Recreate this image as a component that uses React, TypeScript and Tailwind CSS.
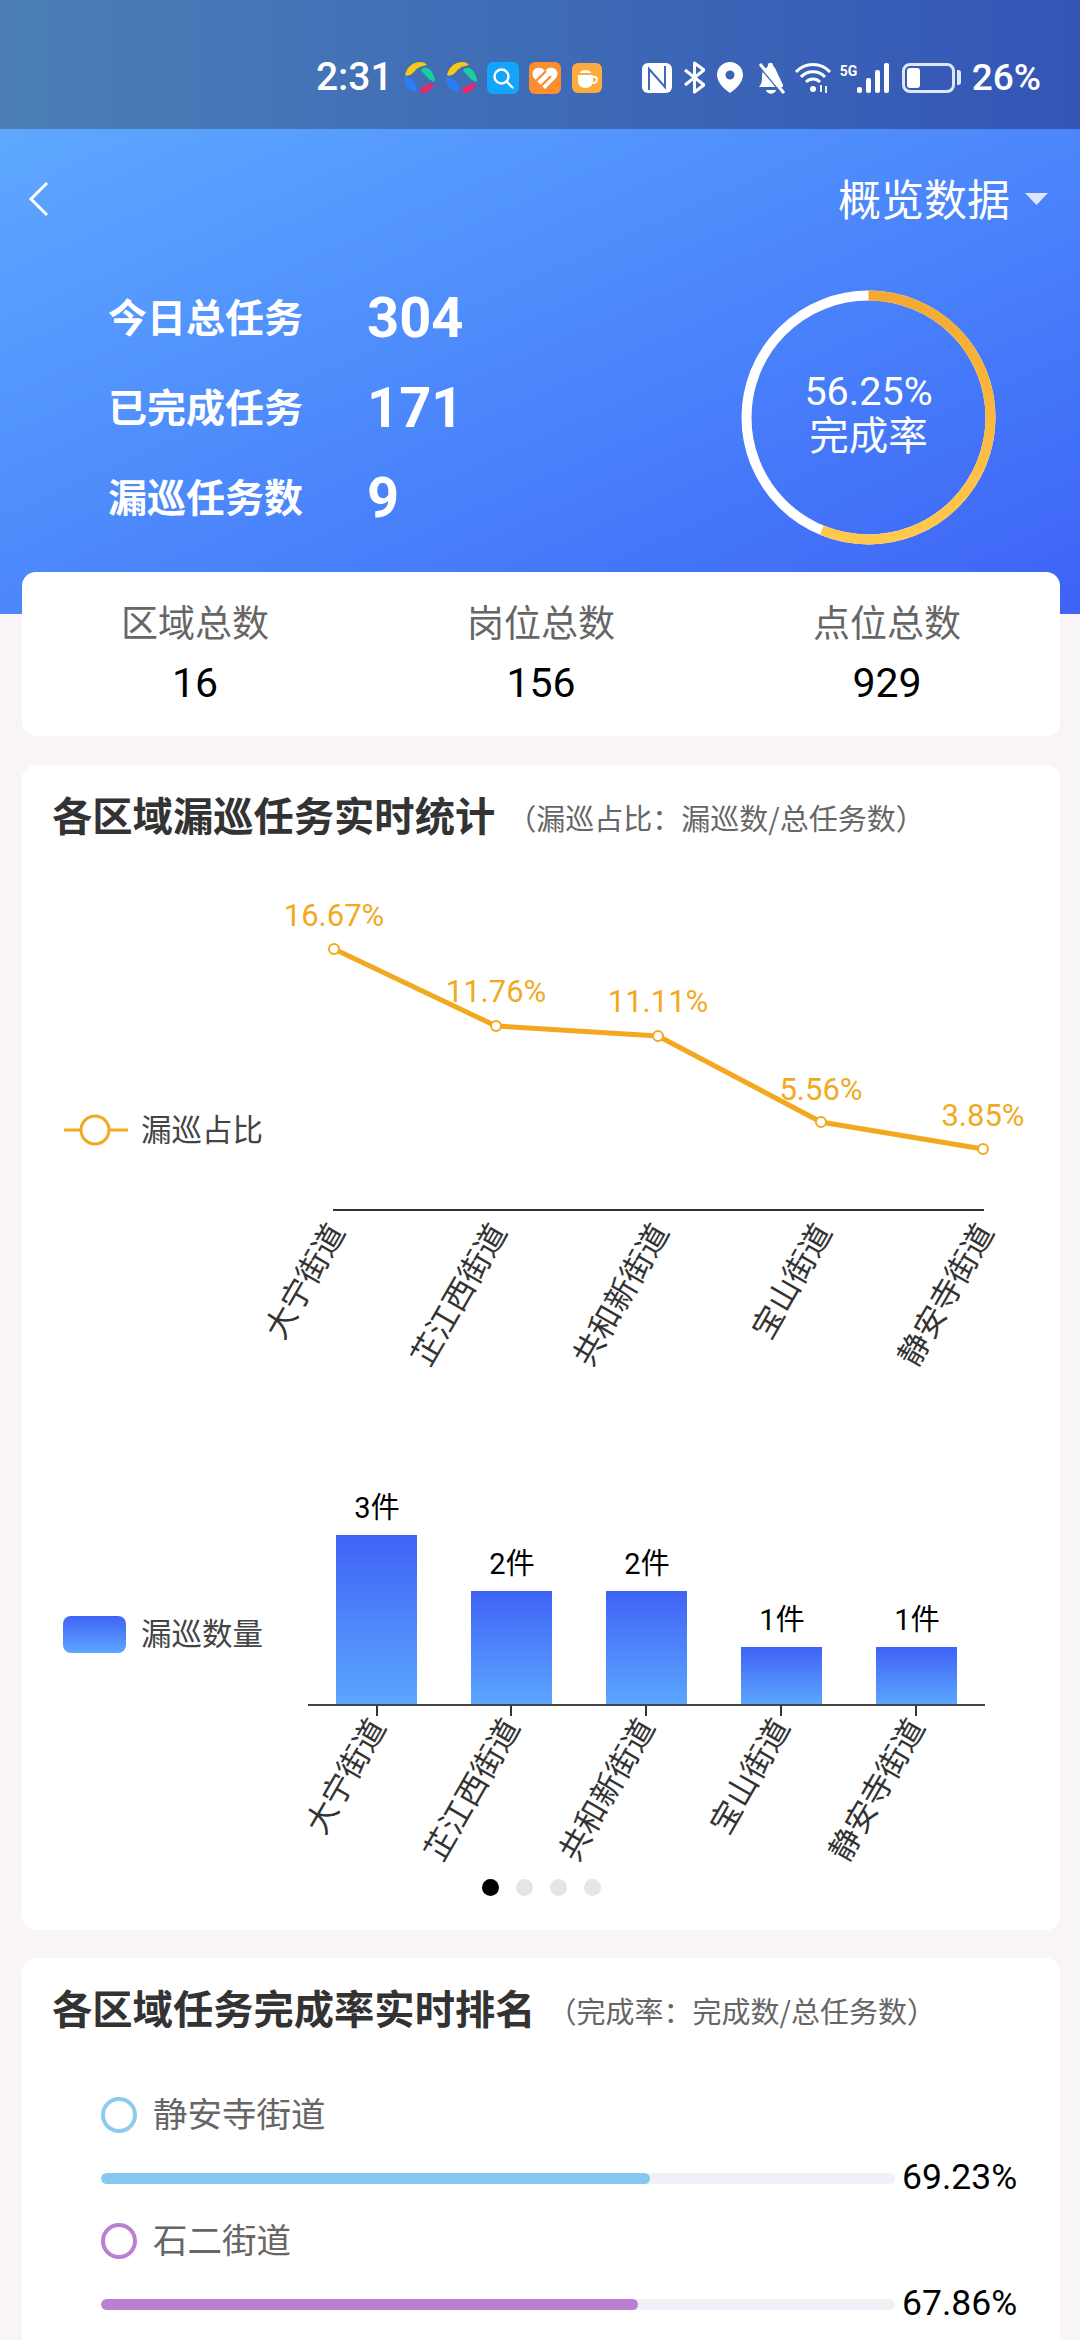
import React from "react";

const lineData = [
  { x: 334, y: 949, label: "16.67%", name: "大宁街道", ly: 926 },
  { x: 496, y: 1026, label: "11.76%", name: "芷江西街道", ly: 1002 },
  { x: 658, y: 1036, label: "11.11%", name: "共和新街道", ly: 1012 },
  { x: 821, y: 1122, label: "5.56%", name: "宝山街道", ly: 1100 },
  { x: 983, y: 1149, label: "3.85%", name: "静安寺街道", ly: 1126 },
];

const barData = [
  { x: 336, top: 1535, label: "3件", name: "大宁街道", tick: 377 },
  { x: 471, top: 1591, label: "2件", name: "芷江西街道", tick: 511 },
  { x: 606, top: 1591, label: "2件", name: "共和新街道", tick: 646 },
  { x: 741, top: 1647, label: "1件", name: "宝山街道", tick: 781 },
  { x: 876, top: 1647, label: "1件", name: "静安寺街道", tick: 916 },
];

const cjk = "font-['Noto_Sans_CJK_SC','Noto_Sans',sans-serif]";

const Swirl = () => (
  <svg width="31" height="31" viewBox="0 0 31 31">
    <path d="M1 13C3 5 9 0 16 0c3 0 6 1 7 3-3 1-6 1-9 3-3 2-5 6-8 7-2 1-4 1-5 0z" fill="#f7c815" />
    <path d="M20 6c3-1 6 1 8 4 2 3 3 7 3 10-3-1-6-2-8-5-2-2-4-5-6-6 0-1 1-2 3-3z" fill="#19cf9b" />
    <path d="M30 22c-1 4-6 8-11 9-2 0-3-1-3-2 1-3 4-5 7-6 2-1 5-2 7-1z" fill="#f5245f" />
    <path d="M1 15c3 1 6 1 8 3 3 3 4 8 4 12C6 30 0 24 0 17c0-1 0-2 1-2z" fill="#2f7cf2" />
  </svg>
);

const StatusIcons = () => (
  <div className="flex items-center">
    <span className="mr-[11px] font-['Roboto',sans-serif] text-[39px] font-medium leading-none text-white">2:31</span>
    <Swirl />
    <div className="ml-[11px]">
      <Swirl />
    </div>
    <svg className="ml-[10px]" width="32" height="32" viewBox="0 0 32 32">
      <rect width="32" height="32" rx="6" fill="#12a5fb" />
      <circle cx="14.500" cy="14.500" r="7" fill="none" stroke="#fff" strokeWidth="2.400" />
      <path d="M19.500 19.500l6 6" stroke="#fff" strokeWidth="2.400" strokeLinecap="round" />
    </svg>
    <svg className="ml-[10px]" width="32" height="32" viewBox="0 0 32 32">
      <rect width="32" height="32" rx="6" fill="#fb8e2e" />
      <path d="M16 27L5 16c-3-4-1-9 3-10 3-1 6 0 8 3 2-3 5-4 8-3 4 1 6 6 3 10z" fill="#fff" />
      <path d="M7 19L17 9M12 24l10-10" stroke="#fb8e2e" strokeWidth="2.400" />
    </svg>
    <svg className="ml-[11px]" width="30" height="30" viewBox="0 0 30 30">
      <rect width="30" height="30" rx="6" fill="#fdab3c" />
      <path d="M6 12h15v6c0 4-3 7-7.500 7S6 22 6 18z" fill="#fff" />
      <path d="M21 14h2c3 0 3 6-2 6" fill="none" stroke="#fff" strokeWidth="1.800" />
      <path d="M8 10c0-4 11-4 11 0z" fill="#fff" />
    </svg>
    <svg className="ml-[40px]" width="30" height="30" viewBox="0 0 30 30">
      <path d="M6 0h18a6 6 0 0 1 6 6v18a6 6 0 0 1-6 6H6a6 6 0 0 1-6-6V6a6 6 0 0 1 6-6z" fill="#fff" />
      <path d="M7 27V6l16 18V3" fill="none" stroke="#3f68bb" strokeWidth="2" />
    </svg>
    <svg className="ml-[12px]" width="21" height="33" viewBox="0 0 21 33" fill="none" stroke="#fff" strokeWidth="3">
      <path d="M1 9l19 15-9.500 7V2L20 9 1 24" strokeLinejoin="round" />
    </svg>
    <svg className="ml-[12px]" width="26" height="31" viewBox="0 0 26 31">
      <path fillRule="evenodd" d="M13 0c7 0 13 5.500 13 13 0 7-7 14-13 18C7 27 0 20 0 13 0 5.500 6 0 13 0zm0 8.500a4.500 4.500 0 1 0 0 9 4.500 4.500 0 0 0 0-9z" fill="#fff" />
    </svg>
    <svg className="ml-[12px]" width="31" height="33" viewBox="0 0 31 33">
      <path d="M4 26c3-3 3-7 3-11 0-3 1-6 3-7 1-1 3-2 3-4 0-3 5-3 5 0 0 1 1 2 2 3l8 17v2z" fill="#fff" />
      <path d="M11 29h10c-1 5-9 5-10 0z" fill="#fff" />
      <path d="M5 3l24 29" stroke="#3f68bb" strokeWidth="1.500" transform="translate(-2 1)" />
      <path d="M5 3l24 29" stroke="#fff" strokeWidth="3" />
    </svg>
    <svg className="ml-[9px]" width="36" height="30" viewBox="0 0 36 30" fill="none" stroke="#fff" strokeWidth="3">
      <path d="M1 9c9-10 25-10 34 0" />
      <path d="M6 14c6-7 18-7 24 0" />
      <path d="M11 19c4-4 10-4 14 0" />
      <circle cx="18" cy="26" r="3" fill="#fff" stroke="none" />
      <path d="M26 22v7M31 23v7" strokeWidth="1.800" />
    </svg>
    <div className="ml-[9px] flex h-[30px] items-end">
      <div className="relative h-[30px] w-[50px]">
        <span className="absolute left-0 top-[1px] font-['Roboto',sans-serif] text-[14px] font-bold leading-[14px] text-white">5G</span>
        <div className="absolute bottom-0 left-[17px] h-[6px] w-[5px] rounded-[2px] bg-white" />
        <div className="absolute bottom-0 left-[26px] h-[15px] w-[5px] rounded-[2px] bg-white" />
        <div className="absolute bottom-0 left-[35px] h-[23px] w-[5px] rounded-[2px] bg-white" />
        <div className="absolute bottom-0 left-[44px] h-[30px] w-[5px] rounded-[2px] bg-white" />
      </div>
    </div>
    <div className="ml-[12px] flex h-[30px] w-[53px] items-center rounded-[8px] border-[3px] border-[#dfe8f8] pl-[2px]">
      <div className="h-[20px] w-[13px] rounded-[3px] bg-white" />
    </div>
    <div className="ml-[2px] h-[15px] w-[4px] rounded-r-[3px] bg-[#dfe8f8]" />
    <span className="ml-[11px] font-['Roboto',sans-serif] text-[37px] font-medium leading-none text-white">26%</span>
  </div>
);

const StatRow = ({ label, value }: { label: string; value: string }) => (
  <div className="flex h-[90px] items-center">
    <span className="w-[259px] pb-[2px] text-[39px] font-bold leading-none text-white">{label}</span>
    <span className="pt-[3px] font-['Roboto',sans-serif] text-[56px] font-bold leading-none text-white">{value}</span>
  </div>
);

const Ring = () => (
  <div className="relative mr-[84px] mt-[19px] h-[255px] w-[255px]">
    <svg width="255" height="255" viewBox="0 0 255 255">
      <defs>
        <linearGradient id="ringGrad" x1="0" y1="0" x2="0" y2="1">
          <stop offset="0" stopColor="#f5a92f" />
          <stop offset="1" stopColor="#ffc94d" />
        </linearGradient>
      </defs>
      <circle cx="127.500" cy="127.500" r="122" fill="none" stroke="#fff" strokeWidth="10" />
      <path d="M127.500 5.500A122 122 0 1 1 80.800 240.200" fill="none" stroke="url(#ringGrad)" strokeWidth="10" />
    </svg>
    <div className="absolute inset-0 flex items-center justify-center pb-[8px] text-center font-['Roboto','Noto_Sans_CJK_SC',sans-serif] text-[39.500px] leading-[45px] text-white">
      <p>
        56.25%
        <br />
        完成率
      </p>
    </div>
  </div>
);

const Summary = ({ label, value }: { label: string; value: string }) => (
  <div className="flex flex-col items-center">
    <span className="text-[37px] leading-[60px] text-[#666666]">{label}</span>
    <span className="pt-[2px] font-['Roboto',sans-serif] text-[41px] leading-[60px] text-black">{value}</span>
  </div>
);

const LineChart = () => (
  <svg className="block" width="1038" height="535" viewBox="22 865 1038 535">
    <polyline
      points={lineData.map((d) => `${d.x},${d.y}`).join(" ")}
      fill="none"
      stroke="#f2a91f"
      strokeWidth="5"
    />
    {lineData.map((d) => (
      <g key={d.name}>
        <circle cx={d.x} cy={d.y} r="5" fill="#fff" stroke="#f2a91f" strokeWidth="2" />
        <text x={d.x} y={d.ly} textAnchor="middle" fontFamily="Roboto, sans-serif" fontSize="31" fill="#f2a91f">
          {d.label}
        </text>
        <text
          x={d.x + 12}
          y={1232}
          textAnchor="end"
          fontSize="31.500"
          fill="#333"
          transform={`rotate(-60 ${d.x + 12} 1232)`}
        >
          {d.name}
        </text>
      </g>
    ))}
    <line x1="333" y1="1210" x2="984" y2="1210" stroke="#333" strokeWidth="2" />
    <line x1="64" y1="1130" x2="128" y2="1130" stroke="#f2a91f" strokeWidth="3" />
    <circle cx="95" cy="1130" r="14" fill="#fff" stroke="#f2a91f" strokeWidth="3" />
    <text x="141" y="1141" fontSize="30.500" fill="#444">漏巡占比</text>
  </svg>
);

const BarChart = () => (
  <svg className="block" width="1038" height="470" viewBox="22 1400 1038 470">
    <defs>
      <linearGradient id="barGrad" x1="0" y1="0" x2="0" y2="1">
        <stop offset="0" stopColor="#3f63f6" />
        <stop offset="1" stopColor="#5ca6ff" />
      </linearGradient>
    </defs>
    {barData.map((d) => (
      <g key={d.name}>
        <rect x={d.x} y={d.top} width="81" height={1705 - d.top} fill="url(#barGrad)" />
        <text x={d.x + 41} y={d.top - 17} textAnchor="middle" fontFamily="Roboto, 'Noto Sans CJK SC', sans-serif" fontSize="29" fill="#000">
          {d.label}
        </text>
        <line x1={d.tick} y1="1705" x2={d.tick} y2="1716" stroke="#333" strokeWidth="2" />
        <text
          x={d.tick + 10}
          y={1727}
          textAnchor="end"
          fontSize="31.500"
          fill="#333"
          transform={`rotate(-60 ${d.tick + 10} 1727)`}
        >
          {d.name}
        </text>
      </g>
    ))}
    <line x1="308" y1="1705" x2="985" y2="1705" stroke="#444" strokeWidth="2" />
    <rect x="63" y="1616" width="63" height="37" rx="8" fill="url(#barGrad)" />
    <text x="141" y="1645" fontSize="30.500" fill="#444">漏巡数量</text>
  </svg>
);

const SectionTitle = ({ title, note, gap }: { title: string; note: string; gap: string }) => (
  <div className="flex h-[100px] items-center pl-[30px]">
    <span className="pb-[1px] text-[40.300px] font-bold leading-none text-[#333333]">{title}</span>
    <span className={`${gap} pt-[5px] text-[29px] leading-none text-[#666666]`}>{note}</span>
  </div>
);

const Rank = ({
  name,
  value,
  width,
  ring,
  fill,
}: {
  name: string;
  value: string;
  width: string;
  ring: string;
  fill: string;
}) => (
  <div className="h-[126px] pl-[79px]">
    <div className="flex h-[36px] items-center">
      <div className={`h-[36px] w-[36px] rounded-full border-4 ${ring}`} />
      <span className="ml-[16px] pb-[5px] text-[34.500px] leading-none text-[#666666]">{name}</span>
    </div>
    <div className="mt-[27px] flex h-[36px] items-center">
      <div className="h-[11px] w-[794px] overflow-hidden rounded-full bg-[#f0f0f7]">
        <div className={`h-full rounded-full ${width} ${fill}`} />
      </div>
      <span className="ml-[7px] font-['Roboto',sans-serif] text-[35.500px] leading-none text-black">{value}</span>
    </div>
  </div>
);

const App = () => {
  return (
    <div className={`h-[2340px] w-[1080px] overflow-hidden bg-[#f9f4f8] ${cjk}`}>
      <div className="flex h-[129px] items-center justify-end bg-linear-to-r from-[#4b7fb6] to-[#3455b6] pr-[39px] pt-[26px]">
        <StatusIcons />
      </div>
      <div className="h-[485px] bg-linear-to-br from-[#5ea8ff] to-[#3e62f6]">
        <div className="flex h-[140px] items-center justify-between pl-[28px] pr-[32px]">
          <svg width="22" height="36" viewBox="0 0 22 36" fill="none" stroke="#fff" strokeWidth="3">
            <path d="M19 2L3 18l16 16" />
          </svg>
          <div className="flex items-center">
            <span className="pb-[4px] text-[43px] leading-none text-white">概览数据</span>
            <svg className="ml-[15px]" width="23" height="12" viewBox="0 0 23 12">
              <path d="M0 0h23L11.500 12z" fill="#dfe6fb" />
            </svg>
          </div>
        </div>
        <div className="flex items-start justify-between pl-[108px] pt-[2px]">
          <div>
            <StatRow label="今日总任务" value="304" />
            <StatRow label="已完成任务" value="171" />
            <StatRow label="漏巡任务数" value="9" />
          </div>
          <Ring />
        </div>
      </div>
      <div className="relative -mt-[42px] ml-[22px] mr-[20px] grid h-[164px] grid-cols-3 content-start rounded-[14px] bg-white pt-[19px]">
        <Summary label="区域总数" value="16" />
        <Summary label="岗位总数" value="156" />
        <Summary label="点位总数" value="929" />
      </div>
      <div className="ml-[22px] mr-[20px] mt-[29px] h-[1165px] rounded-[14px] bg-white">
        <SectionTitle title="各区域漏巡任务实时统计" note="（漏巡占比：漏巡数/总任务数）" gap="ml-[12px]" />
        <LineChart />
        <BarChart />
        <div className="mt-[9px] flex justify-center gap-[17px]">
          <div className="h-[17px] w-[17px] rounded-full bg-black" />
          <div className="h-[17px] w-[17px] rounded-full bg-[#e5e5e5]" />
          <div className="h-[17px] w-[17px] rounded-full bg-[#e5e5e5]" />
          <div className="h-[17px] w-[17px] rounded-full bg-[#e5e5e5]" />
        </div>
      </div>
      <div className="ml-[22px] mr-[20px] mt-[28px] rounded-[14px] bg-white pb-[40px]">
        <SectionTitle title="各区域任务完成率实时排名" note="（完成率：完成数/总任务数）" gap="ml-[12px]" />
        <div className="pt-[39px]">
          <Rank name="静安寺街道" value="69.23%" width="w-[549px]" ring="border-[#8ccbef]" fill="bg-[#85c8f0]" />
          <Rank name="石二街道" value="67.86%" width="w-[537px]" ring="border-[#bb7fd2]" fill="bg-[#bb7fd2]" />
        </div>
      </div>
    </div>
  );
};

export default App;
